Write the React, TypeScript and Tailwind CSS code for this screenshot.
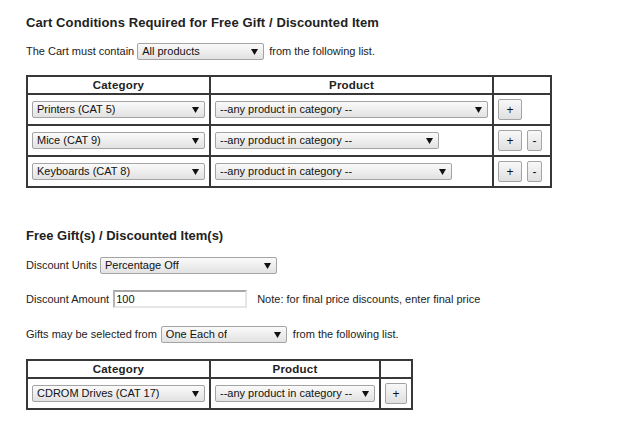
const cartRows = [
  { category: "Printers (CAT 5)", productWidth: "w-[273px]", removable: false },
  { category: "Mice (CAT 9)", productWidth: "w-[224px]", removable: true },
  { category: "Keyboards (CAT 8)", productWidth: "w-[237px]", removable: true },
];

function Arrow() {
  return (
    <svg width="7" height="6" viewBox="0 0 7 6" className="shrink-0">
      <polygon points="0,0 7,0 3.5,6" fill="#111" />
    </svg>
  );
}

function Select({ value, width }: { value: string; width: string }) {
  return (
    <div
      className={`flex h-[17px] shrink-0 items-center justify-between rounded-[2px] border border-[#a4a4a4] bg-linear-to-b from-[#fafafa] to-[#e2e2e2] pr-[5px] pl-[4px] text-[11px] leading-none text-[#111] ${width}`}
    >
      <span className="truncate">{value}</span>
      <Arrow />
    </div>
  );
}

function SmallButton({ label, width }: { label: string; width: string }) {
  return (
    <button
      type="button"
      className={`flex h-[21px] items-center justify-center rounded-[2px] border border-[#a4a4a4] bg-linear-to-b from-[#f8f8f8] to-[#e0e0e0] text-[12px] leading-none text-[#111] ${width}`}
    >
      {label}
    </button>
  );
}

const cell = "border border-[#383838] px-1 py-1 align-middle";
const head =
  "border border-[#383838] p-0 text-center text-[11.5px] font-bold leading-[16px] tracking-[0.2px] text-[#222]";

export default function App() {
  return (
    <div className="min-h-[432px] bg-white pt-[15px] pl-[26px] font-['Liberation_Sans',Arial,sans-serif] text-[11px] text-[#222]">
      <h2 className="text-[13px] leading-[15px] font-bold tracking-[0.1px] text-[#222]">
        Cart Conditions Required for Free Gift / Discounted Item
      </h2>

      <div className="mt-[13px] flex h-[17px] items-center">
        <span>The Cart must contain</span>
        <span className="ml-[3px]">
          <Select value="All products" width="w-[127px]" />
        </span>
        <span className="ml-[5px]">from the following list.</span>
      </div>

      <table className="mt-[15px] border-separate border-spacing-0 border border-[#383838]">
        <thead>
          <tr>
            <th className={head}>Category</th>
            <th className={head}>Product</th>
            <th className={head}></th>
          </tr>
        </thead>
        <tbody>
          {cartRows.map((row) => (
            <tr key={row.category}>
              <td className={cell}>
                <Select value={row.category} width="w-[173px]" />
              </td>
              <td className={cell}>
                <Select value="--any product in category --" width={row.productWidth} />
              </td>
              <td className="border border-[#383838] py-1 pr-2 pl-1 align-middle">
                <div className="flex gap-[5px]">
                  <SmallButton label="+" width="w-[24px]" />
                  {row.removable && <SmallButton label="-" width="w-[15px]" />}
                </div>
              </td>
            </tr>
          ))}
        </tbody>
      </table>

      <h2 className="mt-[40px] text-[13px] leading-[15px] font-bold text-[#222]">
        Free Gift(s) / Discounted Item(s)
      </h2>

      <div className="mt-[14px] flex h-[17px] items-center">
        <span>Discount Units</span>
        <span className="ml-[3px]">
          <Select value="Percentage Off" width="w-[177px]" />
        </span>
      </div>

      <div className="mt-[16px] flex h-[18px] items-center">
        <span>Discount Amount</span>
        <input
          readOnly
          value="100"
          className="ml-[4px] h-[18px] w-[134px] border-2 border-t-[#a8a8a8] border-r-[#e6e6e6] border-b-[#e6e6e6] border-l-[#b4b4b4] bg-white px-[1px] text-[11px] leading-none text-[#111] outline-none"
        />
        <span className="ml-[10px]">Note: for final price discounts, enter final price</span>
      </div>

      <div className="mt-[18px] flex h-[17px] items-center">
        <span>Gifts may be selected from</span>
        <span className="ml-[4px]">
          <Select value="One Each of" width="w-[126px]" />
        </span>
        <span className="ml-[6px]">from the following list.</span>
      </div>

      <table className="mt-[16px] border-separate border-spacing-0 border border-[#383838]">
        <thead>
          <tr>
            <th className={head}>Category</th>
            <th className={head}>Product</th>
            <th className={head}></th>
          </tr>
        </thead>
        <tbody>
          <tr>
            <td className={cell}>
              <Select value="CDROM Drives (CAT 17)" width="w-[173px]" />
            </td>
            <td className={cell}>
              <Select value="--any product in category --" width="w-[160px]" />
            </td>
            <td className={cell}>
              <SmallButton label="+" width="w-[22px]" />
            </td>
          </tr>
        </tbody>
      </table>
    </div>
  );
}
